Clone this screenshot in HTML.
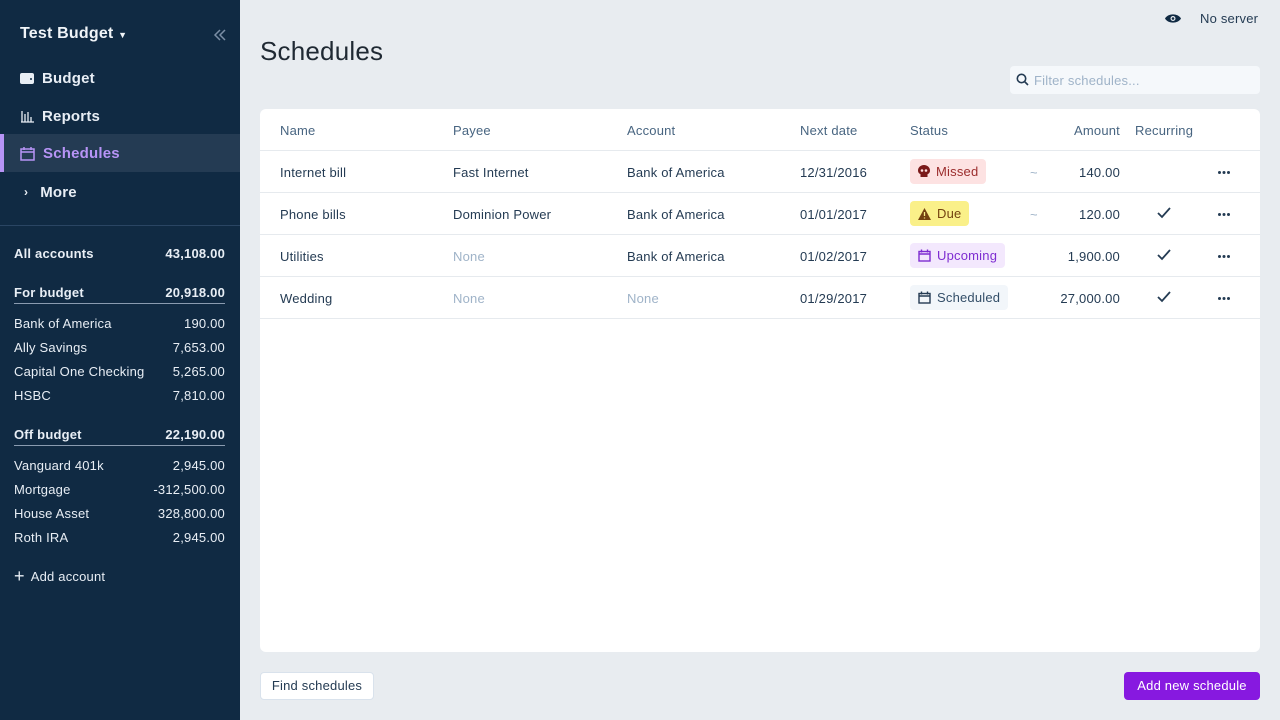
<!DOCTYPE html><html><head><style>
*{box-sizing:border-box;margin:0;padding:0}
body{width:1280px;height:720px;overflow:hidden;font-family:"Liberation Sans",sans-serif;background:#e8ecf0;position:relative;color:#243b53;font-size:13px;letter-spacing:0.2px}
.sb{position:absolute;left:0;top:0;width:240px;height:720px;background:#102a43;color:#fff}
.a{position:absolute}
.nav{position:absolute;left:0;width:240px;height:38px;display:flex;align-items:center;padding-left:20px;font-size:15px;font-weight:bold;color:#e8eef5}
.nav svg{margin-right:8px}
.acc{position:absolute;left:14px;width:211px;display:flex;justify-content:space-between;font-size:13px;color:#e8eef5}
.b{font-weight:bold}
.line{border-bottom:1px solid #8a9bb0;padding-bottom:3px}
.card{position:absolute;left:260px;top:109px;width:1000px;height:543px;background:#fff;border-radius:6px}
.row{position:absolute;left:0;width:1000px;height:42px;border-bottom:1px solid #e6eaee}
.c{position:absolute;top:0;line-height:43px;font-size:13px}
.h{color:#486581}
.none{color:#9fb3c8}
.pill{position:absolute;top:8px;height:25px;border-radius:4px;display:flex;align-items:center;padding:0 8px;font-size:13px}
.pill svg{margin-right:6px}
.dots{position:absolute;left:958px;top:20px}
</style></head><body>
<div class="sb">
<div class="a" style="left:20px;top:25px;font-size:16px;font-weight:bold;color:#f0f4f8">Test Budget <span style="font-size:9px">▼</span></div>
<svg class="a" style="left:213px;top:28px" width="14" height="14" viewBox="0 0 14 14" fill="none" stroke="#7b8ea5" stroke-width="1.5"><path d="M7 2 2 7l5 5M12 2 7 7l5 5"/></svg>
<div class="nav" style="top:59px"><svg width="14" height="13" viewBox="0 0 14 13"><rect x="0" y="1" width="14" height="11" rx="2" fill="#e8eef5"/><circle cx="11" cy="7" r="1" fill="#102a43"/></svg>Budget</div>
<div class="nav" style="top:97px"><svg width="14" height="14" viewBox="0 0 14 14" stroke="#e8eef5" stroke-width="1.3"><path d="M1 13h13M2 2v11M5 5v8M8 3v10M11 8v5"/></svg>Reports</div>
<div class="nav" style="top:134px;background:#243b53;color:#b794f6"><div class="a" style="left:0;top:0;width:4px;height:38px;background:#b794f6"></div><svg width="15" height="15" viewBox="0 0 15 15" fill="none" stroke="#b794f6" stroke-width="1.5"><rect x="1" y="3" width="13" height="11"/><path d="M1 6h13M4 1v3M11 1v3"/></svg>Schedules</div>
<div class="nav" style="top:173px"><span style="font-size:12px;margin:0 12px 0 4px">›</span>More</div>
<div class="a" style="left:0;top:225px;width:240px;border-top:1px solid #2a4563"></div>
<div class="acc b" style="top:246px">All accounts<span>43,108.00</span></div>
<div class="acc b line" style="top:285px">For budget<span>20,918.00</span></div>
<div class="acc" style="top:316px">Bank of America<span>190.00</span></div>
<div class="acc" style="top:340px">Ally Savings<span>7,653.00</span></div>
<div class="acc" style="top:364px">Capital One Checking<span>5,265.00</span></div>
<div class="acc" style="top:388px">HSBC<span>7,810.00</span></div>
<div class="acc b line" style="top:427px">Off budget<span>22,190.00</span></div>
<div class="acc" style="top:458px">Vanguard 401k<span>2,945.00</span></div>
<div class="acc" style="top:482px">Mortgage<span>-312,500.00</span></div>
<div class="acc" style="top:506px">House Asset<span>328,800.00</span></div>
<div class="acc" style="top:530px">Roth IRA<span>2,945.00</span></div>
<div class="acc" style="top:569px;justify-content:flex-start"><span style="font-size:18px;line-height:14px;margin-right:6px">+</span>Add account</div>
</div>
<svg class="a" style="left:1165px;top:13px" width="16" height="11" viewBox="0 0 16 11"><path d="M0 5.5C3 0 13 0 16 5.5 13 11 3 11 0 5.5Z" fill="#102a43"/><circle cx="8" cy="5.5" r="2.5" fill="#e8ecf0"/><circle cx="8" cy="5.5" r="1.3" fill="#102a43"/></svg>
<div class="a" style="left:1200px;top:11px;font-size:13px;color:#243b53">No server</div>
<div class="a" style="left:260px;top:36px;font-size:26px;color:#1f2933">Schedules</div>
<div class="a" style="left:1010px;top:66px;width:250px;height:28px;background:#f5f8fb;border-radius:4px"><svg class="a" style="left:6px;top:7px" width="13" height="13" viewBox="0 0 13 13" fill="none" stroke="#243b53" stroke-width="1.6"><circle cx="5.5" cy="5.5" r="4.2"/><path d="M8.5 8.5 12 12"/></svg><span class="a" style="left:24px;top:7px;color:#9fb3c8;font-size:13px">Filter schedules...</span></div>
<div class="card">
<div class="row" style="top:0;height:42px"><span class="c h" style="left:20px">Name</span><span class="c h" style="left:193px">Payee</span><span class="c h" style="left:367px">Account</span><span class="c h" style="left:540px">Next date</span><span class="c h" style="left:650px">Status</span><span class="c h" style="right:140px">Amount</span><span class="c h" style="left:875px">Recurring</span></div>

<div class="row" style="top:42px"><span class="c" style="left:20px">Internet bill</span><span class="c" style="left:193px">Fast Internet</span><span class="c" style="left:367px">Bank of America</span><span class="c" style="left:540px">12/31/2016</span>
<div class="pill" style="left:650px;background:#fde2e2;color:#9b2c2c"><svg width="12" height="13" viewBox="0 0 12 13"><path d="M6 0C2.5 0 0 2.5 0 5.5c0 2 1 3 2.5 3.8V12h7V9.3C11 8.5 12 7.5 12 5.5 12 2.5 9.5 0 6 0Z" fill="#7a1a1a"/><circle cx="4" cy="5.5" r="1.3" fill="#fde2e2"/><circle cx="8" cy="5.5" r="1.3" fill="#fde2e2"/></svg>Missed</div>
<span class="c none" style="left:770px">~</span><span class="c" style="right:140px">140.00</span><svg class="dots" width="12" height="3"><circle cx="1.5" cy="1.5" r="1.5" fill="#243b53"/><circle cx="6" cy="1.5" r="1.5" fill="#243b53"/><circle cx="10.5" cy="1.5" r="1.5" fill="#243b53"/></svg></div>

<div class="row" style="top:84px"><span class="c" style="left:20px">Phone bills</span><span class="c" style="left:193px">Dominion Power</span><span class="c" style="left:367px">Bank of America</span><span class="c" style="left:540px">01/01/2017</span>
<div class="pill" style="left:650px;background:#faf089;color:#744210"><svg width="13" height="12" viewBox="0 0 13 12"><path d="M6.5 0 13 12H0Z" fill="#744210"/><path d="M6.5 4v4M6.5 9.5v1" stroke="#faf089" stroke-width="1.3"/></svg>Due</div>
<span class="c none" style="left:770px">~</span><span class="c" style="right:140px">120.00</span><svg class="a" style="left:897px;top:14px" width="14" height="12" viewBox="0 0 14 12" fill="none" stroke="#243b53" stroke-width="1.8"><path d="M1 6l4 4 8-9"/></svg><svg class="dots" width="12" height="3"><circle cx="1.5" cy="1.5" r="1.5" fill="#243b53"/><circle cx="6" cy="1.5" r="1.5" fill="#243b53"/><circle cx="10.5" cy="1.5" r="1.5" fill="#243b53"/></svg></div>

<div class="row" style="top:126px"><span class="c" style="left:20px">Utilities</span><span class="c none" style="left:193px">None</span><span class="c" style="left:367px">Bank of America</span><span class="c" style="left:540px">01/02/2017</span>
<div class="pill" style="left:650px;background:#f3e8fd;color:#7e2dd1"><svg width="13" height="13" viewBox="0 0 13 13" fill="none" stroke="#7e2dd1" stroke-width="1.4"><rect x="1" y="2.5" width="11" height="9.5"/><path d="M1 5h11M3.5 0.5v3M9.5 0.5v3"/></svg>Upcoming</div>
<span class="c" style="right:140px">1,900.00</span><svg class="a" style="left:897px;top:14px" width="14" height="12" viewBox="0 0 14 12" fill="none" stroke="#243b53" stroke-width="1.8"><path d="M1 6l4 4 8-9"/></svg><svg class="dots" width="12" height="3"><circle cx="1.5" cy="1.5" r="1.5" fill="#243b53"/><circle cx="6" cy="1.5" r="1.5" fill="#243b53"/><circle cx="10.5" cy="1.5" r="1.5" fill="#243b53"/></svg></div>

<div class="row" style="top:168px"><span class="c" style="left:20px">Wedding</span><span class="c none" style="left:193px">None</span><span class="c none" style="left:367px">None</span><span class="c" style="left:540px">01/29/2017</span>
<div class="pill" style="left:650px;background:#f2f6fa;color:#334e68"><svg width="13" height="13" viewBox="0 0 13 13" fill="none" stroke="#243b53" stroke-width="1.4"><rect x="1" y="2.5" width="11" height="9.5"/><path d="M1 5h11M3.5 0.5v3M9.5 0.5v3"/></svg>Scheduled</div>
<span class="c" style="right:140px">27,000.00</span><svg class="a" style="left:897px;top:14px" width="14" height="12" viewBox="0 0 14 12" fill="none" stroke="#243b53" stroke-width="1.8"><path d="M1 6l4 4 8-9"/></svg><svg class="dots" width="12" height="3"><circle cx="1.5" cy="1.5" r="1.5" fill="#243b53"/><circle cx="6" cy="1.5" r="1.5" fill="#243b53"/><circle cx="10.5" cy="1.5" r="1.5" fill="#243b53"/></svg></div>
</div>
<div class="a" style="left:260px;top:672px;width:114px;height:28px;background:#fff;border:1px solid #d9e2ec;border-radius:4px;line-height:26px;text-align:center;font-size:13px">Find schedules</div>
<div class="a" style="left:1124px;top:672px;width:136px;height:28px;background:#8719e0;border-radius:4px;line-height:28px;text-align:center;font-size:13px;color:#fff">Add new schedule</div>
</body></html>
